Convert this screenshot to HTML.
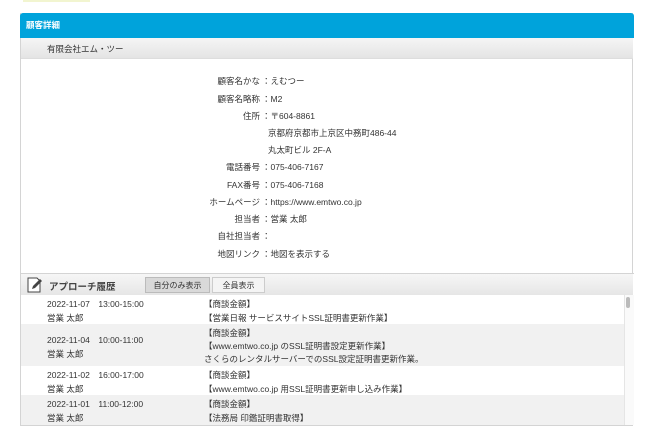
<!DOCTYPE html><html><head><meta charset="utf-8"><style>
body{margin:0;background:#fff;font-family:"Liberation Sans","Noto Sans CJK JP",sans-serif;color:#333;width:655px;height:441px;position:relative;overflow:hidden}
.a{position:absolute}
.t{font-size:8.5px;white-space:nowrap}
.lbl{text-align:right;width:60px;left:200px}
</style></head><body>
<div class="a" style="left:23px;top:0;width:67px;height:2px;background:#f2f5d0"></div>
<div class="a" style="left:20px;top:13px;width:613px;height:413px;border:1px solid #d4d4d4;box-sizing:border-box;border-top:none"></div>
<div class="a" style="left:20px;top:13px;width:614px;height:25px;background:#00a3db;border-radius:3px 3px 0 0"></div>
<div class="a t" style="left:26px;top:19px;color:#fff;font-weight:bold">顧客詳細</div>
<div class="a" style="left:21px;top:38px;width:612px;height:20px;background:linear-gradient(#f5f5f5,#e4e4e4);border-bottom:1px solid #ddd"></div>
<div class="a t" style="left:47px;top:43px">有限会社エム・ツー</div>
<div class="a t lbl" style="top:75px">顧客名かな</div><div class="a t" style="left:262px;top:75px">：えむつー</div>
<div class="a t lbl" style="top:93px">顧客名略称</div><div class="a t" style="left:262px;top:93px">：M2</div>
<div class="a t lbl" style="top:110px">住所</div><div class="a t" style="left:262px;top:110px">：〒604-8861</div>
<div class="a t" style="left:268px;top:127px">京都府京都市上京区中務町486-44</div>
<div class="a t" style="left:268px;top:144px">丸太町ビル 2F-A</div>
<div class="a t lbl" style="top:161px">電話番号</div><div class="a t" style="left:262px;top:161px">：075-406-7167</div>
<div class="a t lbl" style="top:179px">FAX番号</div><div class="a t" style="left:262px;top:179px">：075-406-7168</div>
<div class="a t lbl" style="top:196px">ホームページ</div><div class="a t" style="left:262px;top:196px">：https://www.emtwo.co.jp</div>
<div class="a t lbl" style="top:213px">担当者</div><div class="a t" style="left:262px;top:213px">：営業 太郎</div>
<div class="a t lbl" style="top:230px">自社担当者</div><div class="a t" style="left:262px;top:230px">：</div>
<div class="a t lbl" style="top:248px">地図リンク</div><div class="a t" style="left:262px;top:248px">：地図を表示する</div>
<div class="a" style="left:20px;top:273px;width:614px;height:1px;background:#d4d4d4"></div>
<div class="a" style="left:21px;top:274px;width:612px;height:21px;background:linear-gradient(#f6f6f6,#e6e6e6)"></div>
<svg class="a" style="left:26px;top:276px" width="18" height="18" viewBox="0 0 18 18"><path d="M2 2h9l3 3v11H2z" fill="#fff" stroke="#444"/><path d="M6 13l1-3 7-7 2 2-7 7z" fill="#444"/></svg>
<div class="a t" style="left:49px;top:279px;font-size:9.5px;font-weight:bold;color:#444">アプローチ履歴</div>
<div class="a t" style="left:145px;top:277px;width:65px;height:16px;line-height:16px;text-align:center;background:#d9d9d9;border:1px solid #bbb;box-sizing:border-box;font-size:8px">自分のみ表示</div>
<div class="a t" style="left:212px;top:277px;width:53px;height:16px;line-height:16px;text-align:center;background:#f4f4f4;border:1px solid #ccc;box-sizing:border-box;font-size:8px">全員表示</div>
<div class="a" style="left:21px;top:324px;width:603px;height:42px;background:#f1f1f1"></div>
<div class="a" style="left:21px;top:395px;width:603px;height:30px;background:#f1f1f1"></div>
<div class="a" style="left:624px;top:295px;width:9px;height:130px;background:#fafafa;border-left:1px solid #e5e5e5"></div>
<div class="a" style="left:626px;top:297px;width:4px;height:11px;background:#bbb;border-radius:2px"></div>
<div class="a t" style="left:47px;top:298px">2022-11-07　13:00-15:00</div><div class="a t" style="left:47px;top:312px">営業 太郎</div>
<div class="a t" style="left:204px;top:298px">【商談金額】</div><div class="a t" style="left:204px;top:312px">【営業日報 サービスサイトSSL証明書更新作業】</div>
<div class="a t" style="left:47px;top:334px">2022-11-04　10:00-11:00</div><div class="a t" style="left:47px;top:348px">営業 太郎</div>
<div class="a t" style="left:204px;top:327px">【商談金額】</div><div class="a t" style="left:204px;top:340px">【www.emtwo.co.jp のSSL証明書設定更新作業】</div><div class="a t" style="left:204px;top:353px">さくらのレンタルサーバーでのSSL設定証明書更新作業。</div>
<div class="a t" style="left:47px;top:369px">2022-11-02　16:00-17:00</div><div class="a t" style="left:47px;top:383px">営業 太郎</div>
<div class="a t" style="left:204px;top:369px">【商談金額】</div><div class="a t" style="left:204px;top:383px">【www.emtwo.co.jp 用SSL証明書更新申し込み作業】</div>
<div class="a t" style="left:47px;top:398px">2022-11-01　11:00-12:00</div><div class="a t" style="left:47px;top:412px">営業 太郎</div>
<div class="a t" style="left:204px;top:398px">【商談金額】</div><div class="a t" style="left:204px;top:412px">【法務局 印鑑証明書取得】</div>
</body></html>
